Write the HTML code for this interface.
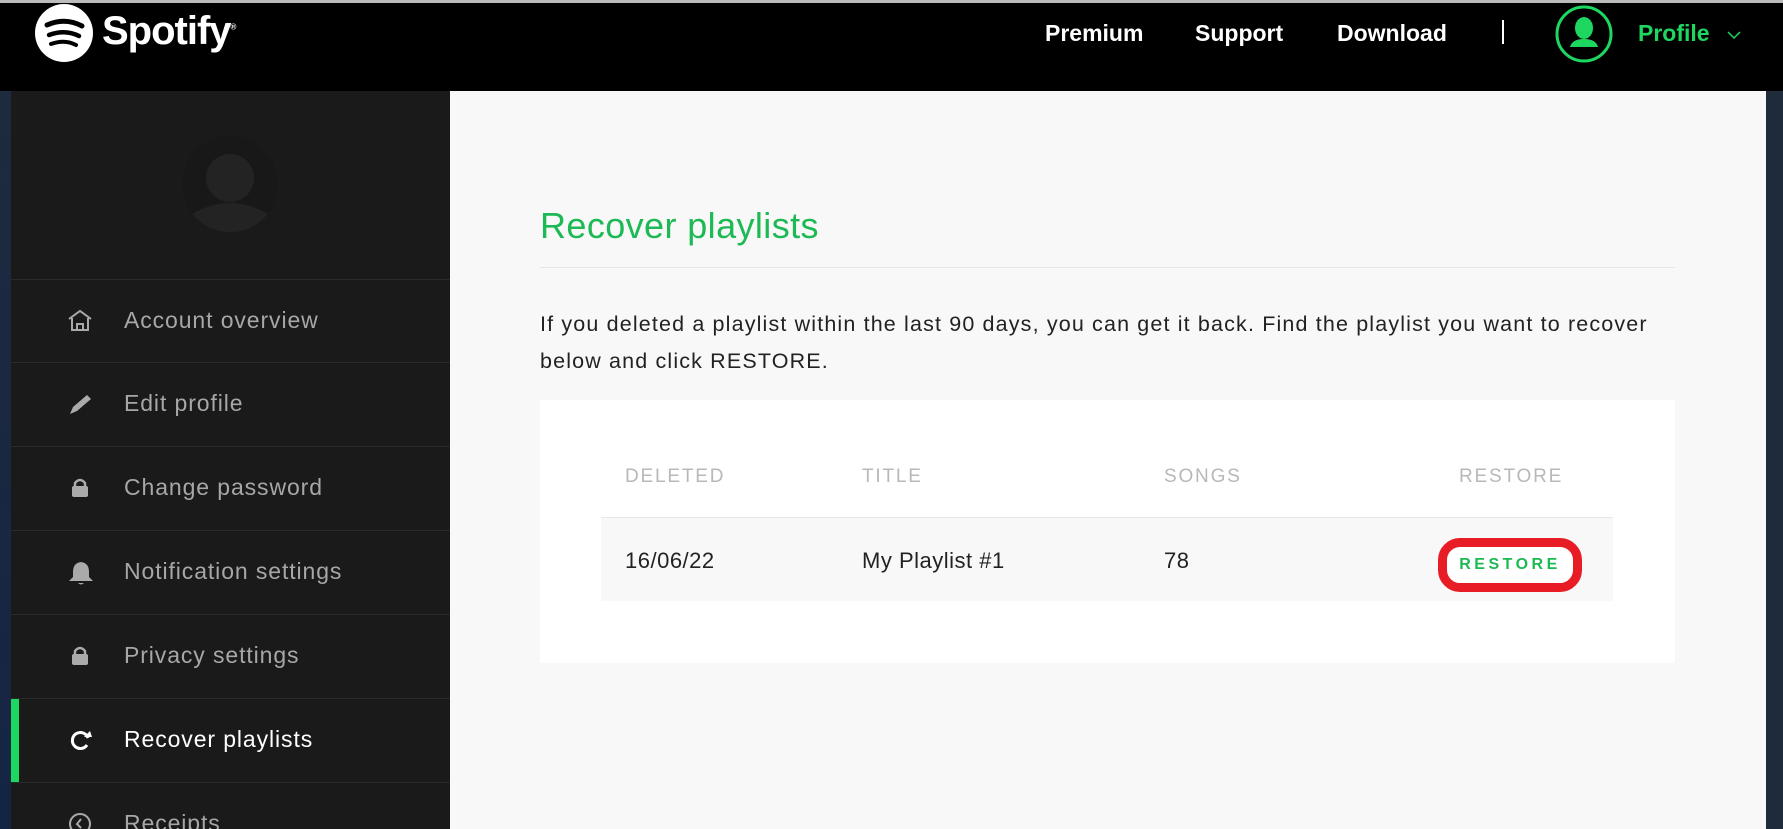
<!DOCTYPE html>
<html style="overflow:hidden;width:1783px;height:829px"><head><meta charset="utf-8"><style>
*{margin:0;padding:0;box-sizing:border-box}
body{width:1783px;height:829px;overflow:hidden;background:#f8f8f8;font-family:"Liberation Sans",sans-serif;position:relative}
.top{position:absolute;left:0;top:0;width:1783px;height:91px;background:#000;border-top:3px solid #bbb}
.lstrip{position:absolute;left:0;top:91px;width:11px;height:738px;background:linear-gradient(#1e2a3e,#142544)}
.rstrip{position:absolute;left:1766px;top:91px;width:17px;height:738px;background:#1f2a3a}
.side{position:absolute;left:11px;top:91px;width:439px;height:738px;background:#1a1a1a;overflow:hidden}
.nav{position:absolute;color:#fff;font-weight:bold;font-size:23px;top:17px}
.row{position:absolute;left:11px;width:439px;height:84px;border-top:1px solid #2a2a2a;overflow:hidden}
.row span{position:absolute;left:113px;top:27px;font-size:23px;color:#a7a7a7;letter-spacing:.9px}
.row svg{position:absolute;left:56px;top:28px}
.hd{position:absolute;top:466px;font-size:19px;color:#b8b8b8;letter-spacing:1.8px}
.cell{position:absolute;top:548px;font-size:22px;color:#222;letter-spacing:.5px}
</style></head><body>
<div class="top">
<svg style="position:absolute;left:35px;top:1px" width="60" height="60" viewBox="0 0 60 60"><circle cx="29" cy="29" r="29" fill="#fff"/><path d="M12 21 Q30 13 47 22" stroke="#000" stroke-width="5" fill="none" stroke-linecap="round"/><path d="M14 31 Q30 25 44 32" stroke="#000" stroke-width="4.5" fill="none" stroke-linecap="round"/><path d="M16 40 Q30 35 41 41" stroke="#000" stroke-width="4" fill="none" stroke-linecap="round"/></svg>
<div style="position:absolute;left:102px;top:6px;color:#fff;font-weight:bold;font-size:40px;letter-spacing:-1px">Spotify<sup style="font-size:8px">®</sup></div>
<div class="nav" style="left:1045px">Premium</div>
<div class="nav" style="left:1195px">Support</div>
<div class="nav" style="left:1337px">Download</div>
<div style="position:absolute;left:1502px;top:17px;width:2px;height:24px;background:#fff"></div>
<svg style="position:absolute;left:1553px;top:0px" width="62" height="62" viewBox="0 0 62 62"><circle cx="31" cy="31" r="27" fill="none" stroke="#1ed760" stroke-width="3"/><ellipse cx="31" cy="25" rx="9" ry="11" fill="#1ed760"/><path d="M17 44 Q19 36 31 36 Q43 36 45 44 Z" fill="#1ed760"/></svg>
<div class="nav" style="left:1638px;color:#1ed760">Profile</div>
<svg style="position:absolute;left:1727px;top:27px" width="14" height="10"><path d="M1 2 L7 8 L13 2" stroke="#1ed760" stroke-width="1.5" fill="none"/></svg>
</div>
<div class="lstrip"></div><div class="rstrip"></div>
<div class="side">
<svg style="position:absolute;left:171px;top:45px" width="96" height="96" viewBox="0 0 96 96"><circle cx="48" cy="48" r="48" fill="#181818"/><circle cx="48" cy="42" r="24" fill="#232323"/><path d="M10 78 Q48 56 86 78 Q70 96 48 96 Q26 96 10 78Z" fill="#232323"/></svg>
</div>
<div class="row" style="top:279px"><svg width="26" height="26" viewBox="0 0 26 26"><path d="M2 11 L13 3 L24 11 M5 10 V22 H21 V10 M10 22 V16 H16 V22" stroke="#aaa" stroke-width="2" fill="none"/></svg><span>Account overview</span></div>
<div class="row" style="top:362px"><svg width="28" height="26" viewBox="0 0 28 26"><path d="M3 23 L6 16 L20 4 L24 8 L10 20 Z" fill="#aaa"/></svg><span>Edit profile</span></div>
<div class="row" style="top:446px"><svg width="26" height="26" viewBox="0 0 26 26"><path d="M8 12 V8 Q13 2 18 8 V12" stroke="#aaa" stroke-width="2.5" fill="none"/><rect x="5" y="11" width="16" height="11" rx="2" fill="#aaa"/></svg><span>Change password</span></div>
<div class="row" style="top:530px"><svg width="28" height="28" viewBox="0 0 28 28"><path d="M14 3 Q22 4 22 13 V18 L26 22 H2 L6 18 V13 Q6 4 14 3Z M11 24 Q14 27 17 24" fill="#aaa"/></svg><span>Notification settings</span></div>
<div class="row" style="top:614px"><svg width="26" height="26" viewBox="0 0 26 26"><path d="M8 12 V8 Q13 2 18 8 V12" stroke="#aaa" stroke-width="2.5" fill="none"/><rect x="5" y="11" width="16" height="11" rx="2" fill="#aaa"/></svg><span>Privacy settings</span></div>
<div class="row" style="top:698px"><div style="position:absolute;left:0;top:0;width:8px;height:84px;background:#1ed760"></div><svg width="28" height="26" viewBox="0 0 28 26"><path d="M21 11 A8 8 0 1 0 20 18" stroke="#fff" stroke-width="3" fill="none"/><path d="M17 10 L25 10 L23 4 Z" fill="#fff"/></svg><span style="color:#fff">Recover playlists</span></div>
<div class="row" style="top:782px;height:47px"><svg width="26" height="26" viewBox="0 0 26 26"><circle cx="13" cy="13" r="10" stroke="#aaa" stroke-width="2" fill="none"/><path d="M14 8 L10 13 L14 17" stroke="#aaa" stroke-width="2" fill="none"/></svg><span>Receipts</span></div>

<div style="position:absolute;left:540px;top:205px;font-size:36px;color:#1db954;letter-spacing:.4px">Recover playlists</div>
<div style="position:absolute;left:540px;top:267px;width:1135px;height:1px;background:#e6e6e6"></div>
<div style="position:absolute;left:540px;top:306px;width:1140px;font-size:21.5px;line-height:37px;color:#222;letter-spacing:1.15px">If you deleted a playlist within the last 90 days, you can get it back. Find the playlist you want to recover below and click RESTORE.</div>
<div style="position:absolute;left:540px;top:400px;width:1135px;height:263px;background:#fff"></div>
<div style="position:absolute;left:601px;top:517px;width:1012px;height:84px;background:#f8f8f8;border-top:1px solid #e8e8e8"></div>
<div class="hd" style="left:625px">DELETED</div>
<div class="hd" style="left:862px">TITLE</div>
<div class="hd" style="left:1164px">SONGS</div>
<div class="hd" style="left:1459px">RESTORE</div>
<div class="cell" style="left:625px">16/06/22</div>
<div class="cell" style="left:862px">My Playlist #1</div>
<div class="cell" style="left:1164px">78</div>
<div style="position:absolute;left:1438px;top:538px;width:144px;height:54px;border:9px solid #e81c24;border-radius:22px;background:#fff;text-align:center;line-height:36px;font-size:16px;font-weight:bold;color:#1db954;letter-spacing:3.5px">RESTORE</div>
</body></html>
